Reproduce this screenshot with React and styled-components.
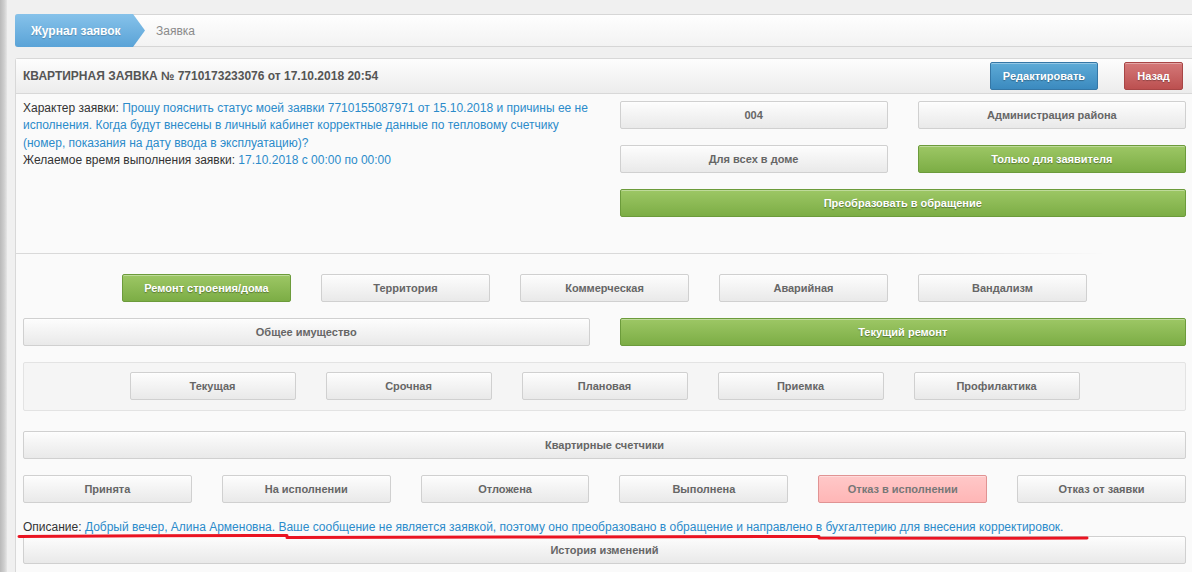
import React from 'react';
import styled, { createGlobalStyle, css } from 'styled-components';

const GlobalStyle = createGlobalStyle`
  html, body {
    margin: 0;
    padding: 0;
    background: #f0f0f0;
    font-family: "Liberation Sans", Arial, sans-serif;
    overflow: hidden;
  }
`;

const Page = styled.div`
  position: relative;
  display: flex;
  width: 1192px;
  height: 572px;
  overflow: hidden;
`;

const SideEdge = styled.div`
  width: 7px;
  flex: none;
  background: linear-gradient(to right, #b9b9b9, #cfcfcf 60%, #e6e6e6);
`;

const Main = styled.div`
  flex: none;
  width: 1178px;
  margin-left: 8px;
  padding-top: 14px;
`;

const Breadcrumbs = styled.div`
  display: flex;
  align-items: stretch;
  height: 33px;
  box-sizing: border-box;
  border: 1px solid #d6d6d6;
  border-right: none;
  border-radius: 3px 0 0 3px;
  background: linear-gradient(#fefefe, #f3f3f3);
`;

const Crumb = styled.div`
  display: flex;
  align-items: center;
  font-size: 12px;
  white-space: nowrap;
  ${({ $active }) =>
    $active
      ? css`
          flex: none;
          margin: -1px 0 -1px -1px;
          padding: 0 0 0 16px;
          width: 130px;
          box-sizing: border-box;
          color: #fff;
          font-weight: bold;
          text-shadow: 0 1px 1px rgba(0, 0, 0, 0.2);
          border-radius: 3px 0 0 3px;
          background: linear-gradient(#86c2ea, #5aa3d7);
          clip-path: polygon(0 0, calc(100% - 12px) 0, 100% 50%, calc(100% - 12px) 100%, 0 100%);
        `
      : css`
          padding-left: 11px;
          color: #8a8a8a;
        `}
`;

const Panel = styled.div`
  margin-top: 11px;
  border: 1px solid #d8d8d8;
  border-right: none;
  border-radius: 3px 0 0 0;
  background: #fafafa;
`;

const PanelHeader = styled.div`
  display: flex;
  align-items: center;
  height: 34px;
  padding: 0 10px 0 7px;
  border-bottom: 1px solid #d8d8d8;
  background: linear-gradient(#fdfdfd, #ececec);
`;

const Title = styled.div`
  flex: 1;
  font-size: 12px;
  font-weight: bold;
  color: #555;
`;

const HeaderActions = styled.div`
  display: flex;
  gap: 26px;
`;

const variants = {
  default: css`
    color: #666;
    border-color: #d0d0d0;
    background: linear-gradient(#fdfdfd, #e9e9e9);
  `,
  success: css`
    color: #fff;
    text-shadow: 0 1px 1px rgba(0, 0, 0, 0.35);
    border-color: #6c9b3b;
    background: linear-gradient(#9dc765, #7cad45);
  `,
  primary: css`
    color: #fff;
    text-shadow: 0 1px 1px rgba(0, 0, 0, 0.3);
    border-color: #3577a6;
    background: linear-gradient(#5eabd7, #3b8abf);
  `,
  danger: css`
    color: #fff;
    text-shadow: 0 1px 1px rgba(0, 0, 0, 0.3);
    border-color: #a84646;
    background: linear-gradient(#d47878, #bc5050);
  `,
  pink: css`
    color: #777;
    border-color: #e09393;
    background: linear-gradient(#ffc8c8, #ffb6b6);
  `,
};

const Button = styled.div`
  box-sizing: border-box;
  height: 28px;
  line-height: 26px;
  border: 1px solid;
  border-radius: 2px;
  text-align: center;
  font-size: 11px;
  font-weight: bold;
  white-space: nowrap;
  box-shadow: inset 0 1px 0 rgba(255, 255, 255, 0.35);
  ${({ $v }) => variants[$v || 'default']}
  ${({ $w }) => $w && css`width: ${$w}px; flex: none;`}
`;

const Body = styled.div`
  padding: 6px 7px 20px;
`;

const Top = styled.div`
  display: grid;
  grid-template-columns: 1fr 1fr;
  column-gap: 30px;
`;

const Info = styled.div`
  font-size: 12px;
  line-height: 17.3px;
  color: #333;
`;

const Value = styled.span`
  color: #2b8bca;
`;

const ActionGrid = styled.div`
  display: grid;
  grid-template-columns: 1fr 1fr;
  column-gap: 30px;
  row-gap: 16px;
  padding-top: 1px;
`;

const Wide = styled(Button)`
  grid-column: 1 / -1;
`;

const Divider = styled.div`
  height: 1px;
  margin: 36px 80px 20px -8px;
  background: linear-gradient(to right, #d9d9d9, #d9d9d9 80%, rgba(217, 217, 217, 0));
`;

const CenterRow = styled.div`
  display: flex;
  justify-content: center;
  gap: 30px;
`;

const Split = styled.div`
  display: grid;
  grid-template-columns: 1fr 1fr;
  gap: 30px;
  margin-top: 16px;
`;

const Well = styled.div`
  margin-top: 16px;
  padding: 9px 0 10px;
  border: 1px solid #e3e3e3;
  border-radius: 2px;
  background: #f5f5f5;
`;

const Full = styled(Button)`
  margin-top: ${({ $mt }) => $mt || 0}px;
`;

const StatusRow = styled.div`
  display: grid;
  grid-template-columns: repeat(6, 1fr);
  gap: 30px;
  margin-top: 16px;
`;

const Description = styled.div`
  margin: 16px 0 0;
  font-size: 12px;
  line-height: 17px;
  color: #333;
  white-space: nowrap;
`;

const Annotation = styled.svg`
  position: absolute;
  left: 0;
  top: 0;
  pointer-events: none;
`;

const categories = ['Ремонт строения/дома', 'Территория', 'Коммерческая', 'Аварийная', 'Вандализм'];
const priorities = ['Текущая', 'Срочная', 'Плановая', 'Приемка', 'Профилактика'];
const statuses = ['Принята', 'На исполнении', 'Отложена', 'Выполнена', 'Отказ в исполнении', 'Отказ от заявки'];

export default function App() {
  return (
    <>
      <GlobalStyle />
      <Page>
        <SideEdge />
        <Main>
          <Breadcrumbs>
            <Crumb $active>Журнал заявок</Crumb>
            <Crumb>Заявка</Crumb>
          </Breadcrumbs>

          <Panel>
            <PanelHeader>
              <Title>КВАРТИРНАЯ ЗАЯВКА № 7710173233076 от 17.10.2018 20:54</Title>
              <HeaderActions>
                <Button $v="primary" $w={108}>Редактировать</Button>
                <Button $v="danger" $w={59}>Назад</Button>
              </HeaderActions>
            </PanelHeader>

            <Body>
              <Top>
                <Info>
                  Характер заявки:{' '}
                  <Value>
                    Прошу пояснить статус моей заявки 7710155087971 от 15.10.2018 и причины ее не
                    исполнения. Когда будут внесены в личный кабинет корректные данные по тепловому
                    счетчику (номер, показания на дату ввода в эксплуатацию)?
                  </Value>
                  <br />
                  Желаемое время выполнения заявки: <Value>17.10.2018 с 00:00 по 00:00</Value>
                </Info>
                <ActionGrid>
                  <Button>004</Button>
                  <Button>Администрация района</Button>
                  <Button>Для всех в доме</Button>
                  <Button $v="success">Только для заявителя</Button>
                  <Wide $v="success">Преобразовать в обращение</Wide>
                </ActionGrid>
              </Top>

              <Divider />

              <CenterRow>
                {categories.map((c, i) => (
                  <Button key={c} $w={169} $v={i === 0 ? 'success' : 'default'}>{c}</Button>
                ))}
              </CenterRow>

              <Split>
                <Button>Общее имущество</Button>
                <Button $v="success">Текущий ремонт</Button>
              </Split>

              <Well>
                <CenterRow>
                  {priorities.map((p) => (
                    <Button key={p} $w={166}>{p}</Button>
                  ))}
                </CenterRow>
              </Well>

              <Full $mt={20}>Квартирные счетчики</Full>

              <StatusRow>
                {statuses.map((s) => (
                  <Button key={s} $v={s === 'Отказ в исполнении' ? 'pink' : 'default'}>{s}</Button>
                ))}
              </StatusRow>

              <Description>
                Описание:{' '}
                <Value>
                  Добрый вечер, Алина Арменовна. Ваше сообщение не является заявкой, поэтому оно
                  преобразовано в обращение и направлено в бухгалтерию для внесения корректировок.
                </Value>
              </Description>

              <Full>История изменений</Full>
            </Body>
          </Panel>
        </Main>

        <Annotation width="1192" height="572" viewBox="0 0 1192 572">
          <path
            d="M19 536.5 L150 535.8 L287 535.5 M287 537.5 L560 537 L819 536.5 M819 538 L1000 538.3 L1087 538"
            fill="none"
            stroke="#ea1422"
            strokeWidth="3"
            strokeLinecap="round"
          />
        </Annotation>
      </Page>
    </>
  );
}
